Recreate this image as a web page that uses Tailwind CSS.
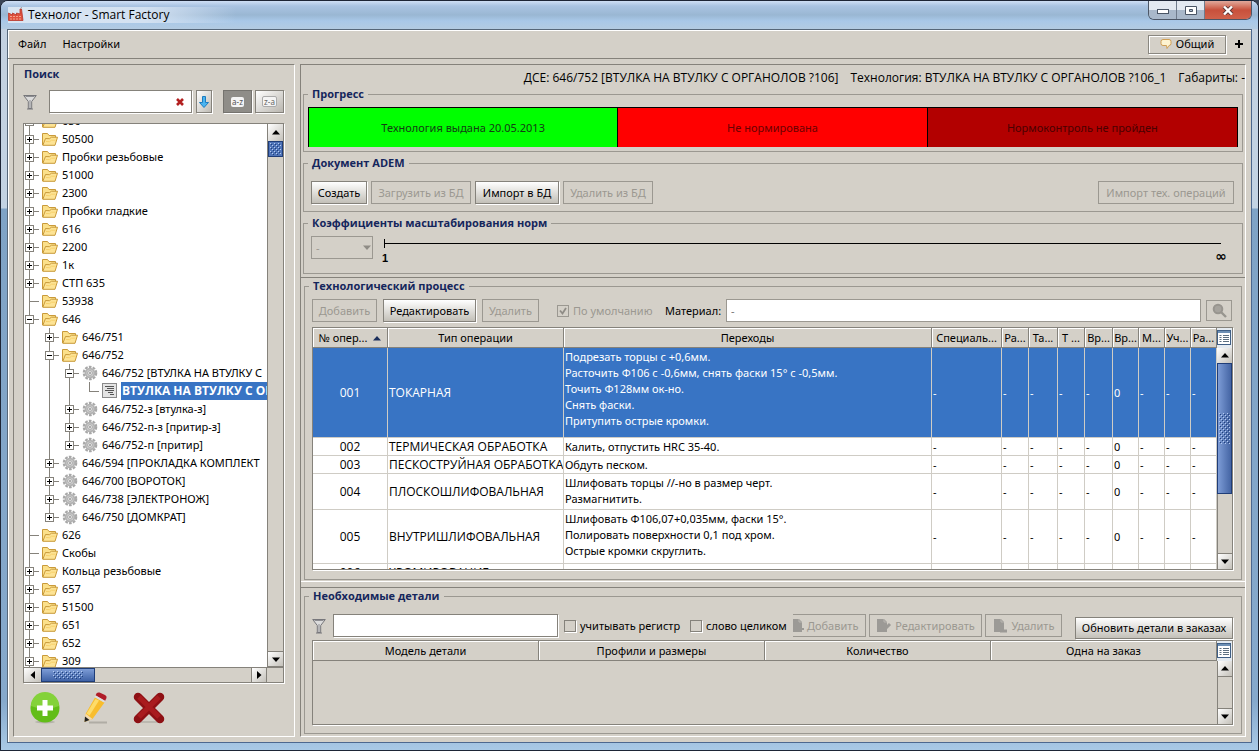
<!DOCTYPE html>
<html lang="ru">
<head>
<meta charset="utf-8">
<title>Технолог - Smart Factory</title>
<script src="https://cdn.jsdelivr.net/npm/@tailwindcss/browser@4"></script>
</head>
<body class="bg-[#3a4456] font-['Noto_Sans','Open_Sans',sans-serif] text-[11px] leading-4 text-black">

<svg class="absolute size-0" aria-hidden="true">
  <symbol id="folder" viewBox="0 0 16 14">
    <path d="M.5 13V1.500h5l1.500 2h6.500v3" fill="#fbe08a" stroke="#c99a3a"/>
    <path d="M.8 13.300 3.500 6.500l4 .2 2-1.500h6L13 13.300z" fill="#fde394" stroke="#c99a3a"/>
    <path d="M4 9.500l3.500.2 2-1.500h4" fill="none" stroke="#f6d06a"/>
  </symbol>
  <symbol id="gear" viewBox="0 0 16 16">
    <circle cx="8" cy="8" r="6.200" fill="none" stroke="#a8a8a8" stroke-width="2.200" stroke-dasharray="2.700 1.200"/>
    <circle cx="8" cy="8" r="4.400" fill="#d2d2d2" stroke="#b2b2b2" stroke-width="1.800"/>
    <circle cx="8" cy="8" r="2.400" fill="#e8e8e8" stroke="#9e9e9e" stroke-width=".8"/>
    <circle cx="8" cy="8" r="1" fill="#999"/>
  </symbol>
  <symbol id="doc" viewBox="0 0 16 16">
    <rect x=".5" y=".5" width="14" height="14" fill="#e4e4e4" stroke="#8a8a8a"/>
    <path d="M3 3.500h9M5 5.500h7M3 7.500h9M6 9.500h5M8 11.500h4" stroke="#555"/>
  </symbol>
  <symbol id="funnel" viewBox="0 0 14 16">
    <path d="M.7 1.500h12.600L8.700 7.500V14.500H5.300V7.500z" fill="#dcdcdc" stroke="#77777b"/>
    <path d="M2.500 2.500h9M7 6v8" stroke="#8e8e92"/>
    <path d="M4 15h6" stroke="#77777b"/>
  </symbol>
  <symbol id="up" viewBox="0 0 8 5"><path d="M4 0l4 4.500H0z"/></symbol>
  <symbol id="down" viewBox="0 0 8 5"><path d="M4 5L0 .5h8z"/></symbol>
  <symbol id="columns" viewBox="0 0 14 15">
    <rect x=".5" y=".5" width="13" height="14" fill="#fff" stroke="#3f5f86"/>
    <path d="M1 2h12" stroke="#6d8fb4" stroke-width="2"/>
    <path d="M2.500 5.500h2M6 5.500h6M2.500 7.500h2M6 7.500h6M2.500 9.500h2M6 9.500h6M2.500 11.500h2M6 11.500h6" stroke="#5d6f80"/>
  </symbol>
  <symbol id="page" viewBox="0 0 16 16">
    <path d="M1 1h7l3 3v10H1z" fill="#9c9a96"/>
    <path d="M8 1v3h3" fill="none" stroke="#b9b6b0"/>
  </symbol>
  <pattern id="grip" width="4" height="4" patternUnits="userSpaceOnUse">
    <path d="M0 0h1v1H0zM2 2h1v1H2z" fill="#b4caf0"/><path d="M1 1h1v1H1zM3 3h1v1H3z" fill="#20407c"/>
  </pattern>
</svg>

<div class="flex h-screen flex-col overflow-hidden rounded-t-lg border border-[#1d2536] bg-[linear-gradient(180deg,#c3d0e0_0,#c3d3e3_207px,#7fa3c6_208px,#86a9cc_700px,#a9c9e6_100%)]">
  <header class="flex h-7 shrink-0 items-center bg-[linear-gradient(180deg,#cfdff5_0,#a9c3e2_5px,#9ab7d3_14px,#a9c8e8_20px,#b3cbe2_100%)] pl-[7px]">
    <div class="flex flex-1 items-center gap-1 bg-[linear-gradient(90deg,#d9e5f2_0,#d3e1f1_12%,transparent_20%)]">
      <svg class="size-4" viewBox="0 0 16 16"><path d="M.5 13.500V6l4 2V6l4 2V6l3.500 1V2h1.500l1.500 11.500z" fill="#e0523f" stroke="#b8352a" stroke-width=".8"/><path d="M2 9.500h11M2 12h11" stroke="#f6a08c" stroke-dasharray="2 1"/><path d="M12.500 1.200l1.500-.7" stroke="#999"/></svg>
      <h1 class="font-['Open_Sans'] text-[12px] font-normal">Технолог - Smart Factory</h1>
    </div>
    <div class="mr-[6px] flex h-[19px] self-start overflow-hidden rounded-b-md border border-t-0 border-[#4c5666] text-white">
      <button class="flex w-7 items-center justify-center border-r border-[#6f7b8c] bg-linear-to-b from-[#e3e9f1] from-50% to-[#a9b8ca] to-50%" aria-label="Свернуть"><svg class="h-2 w-3" viewBox="0 0 12 8"><rect x=".5" y="3.500" width="11" height="4" fill="#fff" stroke="#4a5565"/></svg></button>
      <button class="flex w-7 items-center justify-center border-r border-[#6f7b8c] bg-linear-to-b from-[#e3e9f1] from-50% to-[#a9b8ca] to-50%" aria-label="Развернуть"><svg class="h-[9px] w-3" viewBox="0 0 12 9"><path d="M.5.5h11v8H.5zM4.500 3.500h3v2h-3z" fill="#fff" stroke="#4a5565" fill-rule="evenodd"/></svg></button>
      <button class="flex w-[46px] items-center justify-center bg-linear-to-b from-[#e0a89b] via-[#c8503c] via-50% to-[#d0614a]" aria-label="Закрыть"><svg class="h-[9px] w-3" viewBox="0 0 12 9"><path d="M2 .5l8 8M10 .5l-8 8" stroke="#5a3434" stroke-width="4"/><path d="M2 .5l8 8M10 .5l-8 8" stroke="#fff" stroke-width="2.400"/></svg></button>
    </div>
  </header>

  <div class="mx-[6px] mb-[7px] flex min-h-0 flex-1 flex-col border border-[#56677a] border-r-[#4d688f] border-b-[#4d688f] bg-[#d4d0c8] shadow-[inset_1px_1px_0_#fff]">
    <nav class="flex h-[29px] shrink-0 items-center border-b border-[#85827b] pr-2 pl-[10px]">
      <button class="mr-4">Файл</button>
      <button>Настройки</button>
      <div class="flex-1"></div>
      <button class="mr-[1px] flex h-[19px] w-[78px] items-center justify-center gap-1 border border-[#8a8780] shadow-[inset_1px_1px_0_#fff,1px_1px_0_#fff]"><svg class="size-3" viewBox="0 0 12 12"><path d="M3 1.500h6a2 2 0 0 1 2 2v2a2 2 0 0 1-2 2L7 10.500 6.500 7.500H3a2 2 0 0 1-2-2v-2a2 2 0 0 1 2-2z" fill="#fdf3d0" stroke="#cf9f55"/></svg>Общий</button>
      <button class="ml-2" aria-label="Добавить вкладку"><svg class="size-2" viewBox="0 0 8 8"><path d="M4 0v8M0 4h8" stroke="#000" stroke-width="2"/></svg></button>
    </nav>

    <main class="flex min-h-0 flex-1 gap-[5px] px-[5px] pt-[5px] pb-[5px]">
      <aside class="flex w-[282px] shrink-0 flex-col border border-[#85827b] border-r-white border-b-white pr-[10px] pl-[9px]">
        <h2 class="pt-[1px] pl-[1px] font-['Open_Sans'] font-bold text-[#15265c]">Поиск</h2>
        <div class="mt-2 flex h-[23px] items-center">
          <svg class="mr-3 h-4 w-[14px]"><use href="#funnel"/></svg>
          <div class="relative mr-1 h-full flex-1">
            <input type="text" aria-label="Поиск" class="size-full border border-[#85827b] bg-white px-1 shadow-[1px_1px_0_#fff]">
            <button class="absolute top-2 right-2" aria-label="Очистить"><svg class="block h-2 w-2" viewBox="0 0 8 8"><path d="M1 1l6 6M7 1L1 7" stroke="#b32020" stroke-width="2.600"/></svg></button>
          </div>
          <button class="mr-[11px] flex h-full w-4 items-center justify-center border border-[#85827b] bg-linear-to-br from-white to-[#bdbab3] shadow-[1px_1px_0_#fff]" aria-label="Вниз"><svg class="h-3 w-[10px]" viewBox="0 0 10 12"><path d="M3.500.5h3v6h3L5 11.500.5 6.500h3z" fill="#4ab4f0" stroke="#1d7cc0"/></svg></button>
          <button class="mr-[3px] flex h-full w-[29px] items-center justify-center border border-[#75736e] bg-[#8f8d88] shadow-[1px_1px_0_#fff]"><span class="rounded-xs bg-[#f4f4f4] px-[1px] text-[8px] leading-[10px] text-[#555]">a-z</span></button>
          <button class="flex h-full w-[29px] items-center justify-center border border-[#85827b] bg-linear-to-br from-white to-[#b9b6af] shadow-[1px_1px_0_#fff]"><span class="rounded-xs border border-[#aaa] bg-[#f4f4f4] px-[1px] text-[8px] leading-[9px] text-[#666]">z-a</span></button>
        </div>
        <div class="mt-[10px] flex min-h-0 flex-1 flex-col border border-[#85827b] bg-[#d4d0c8] shadow-[1px_1px_0_#fff]">
          <div class="flex min-h-0 flex-1">
            <div class="min-w-0 flex-1 overflow-hidden bg-white"><ul id="tree" class="-mt-[12px]"></ul></div>
            <div class="flex w-4 flex-col border-l border-[#85827b]">
              <button class="flex h-[17px] items-center justify-center bg-linear-to-br from-white to-[#c4c1ba]" aria-label="Вверх"><svg class="h-[5px] w-2"><use href="#up"/></svg></button>
              <div class="h-4 border border-[#1f3d78] bg-[#4f74b8] p-[1px]"><svg class="size-full"><rect width="100%" height="100%" fill="url(#grip)"/></svg></div>
              <div class="flex-1"></div>
              <button class="flex h-4 items-center justify-center border-y border-[#85827b] bg-linear-to-br from-white to-[#c4c1ba]" aria-label="Вниз"><svg class="h-[5px] w-2"><use href="#down"/></svg></button>
            </div>
          </div>
          <div class="flex h-[15px] border-t border-[#85827b] pr-[16px]">
            <button class="flex w-[17px] items-center justify-center bg-linear-to-br from-white to-[#c4c1ba]" aria-label="Влево"><svg class="size-2 -rotate-90"><use href="#up"/></svg></button>
            <div class="w-[54px] border border-[#1f3d78] bg-linear-to-b from-[#7d9cd6] to-[#3f62a6] px-[11px] py-[2px]"><svg class="size-full"><rect width="100%" height="100%" fill="url(#grip)"/></svg></div>
            <div class="flex-1"></div>
            <button class="flex w-4 items-center justify-center border-x border-[#85827b] bg-linear-to-br from-white to-[#c4c1ba]" aria-label="Вправо"><svg class="size-2 rotate-90"><use href="#up"/></svg></button>
          </div>
        </div>
        <div class="flex h-[53px] shrink-0 items-center gap-5 pb-1 pl-[6px]">
          <button aria-label="Добавить"><svg class="size-8" viewBox="0 0 32 32"><ellipse cx="16" cy="30" rx="10" ry="1.500" fill="#b5b2aa"/><circle cx="16" cy="16" r="14.500" fill="#62bd18"/><path d="M2 14a14 14 0 0 1 28 0q-14 6-28 0z" fill="#84d23a"/><path d="M16 8v16M8 16h16" stroke="#fff" stroke-width="5"/></svg></button>
          <button aria-label="Редактировать"><svg class="size-8" viewBox="0 0 32 32"><path d="M8 30.500h18" stroke="#b0ada5" stroke-width="2"/><path d="M14 5.500l9.500 5L11.500 27 3.500 30l1-8z" fill="#f8bd2d"/><path d="M14.500 7l-9 14.500 3 2 9.500-15z" fill="#fddc6a"/><path d="M4.500 21.500l7 5.500-8 3z" fill="#f1d9b0"/><path d="M4 24.500l4.500 3.500-5 2z" fill="#222"/><path d="M14.500 3.500l9.500 5.500 1.500-3q.5-2-1.500-3L18.500.5q-2-.5-3 1z" fill="#b01c28"/><path d="M13.500 5l9.500 5.500 1-1.700-9.500-5.500z" fill="#ddd"/></svg></button>
          <button aria-label="Удалить"><svg class="size-8" viewBox="0 0 32 32"><path d="M5 30h22" stroke="#bbb8b0" stroke-width="2"/><path d="M5 5l22 22M27 5L5 27" stroke="#8e1014" stroke-width="8.500" stroke-linecap="round"/><path d="M6 5l20 20M26 5L6 25" stroke="#a91b1e" stroke-width="5"/></svg></button>
        </div>
      </aside>

      <section class="flex min-w-0 flex-1 flex-col border border-[#85827b] border-r-white border-b-white">
        <div class="flex h-[21px] shrink-0 items-end justify-end gap-3 overflow-hidden pl-2 font-['Open_Sans'] text-[12px] whitespace-nowrap">
          <span>ДСЕ: 646/752 [ВТУЛКА НА ВТУЛКУ С ОРГАНОЛОВ ?106]</span><span>Технология: ВТУЛКА НА ВТУЛКУ С ОРГАНОЛОВ ?106_1</span><span>Габариты: -</span>
        </div>
        <fieldset class="mx-[2px] min-w-0 shrink-0 border border-[#9b9891] px-1 pt-[5px] pb-1">
          <legend class="px-1 font-['Open_Sans'] font-bold text-[#15265c]">Прогресс</legend>
          <div class="grid h-10 grid-cols-3 divide-x divide-black border border-black text-center leading-[39px]">
            <div class="bg-[#00ff00] text-[#143c14]">Технология выдана 20.05.2013</div>
            <div class="bg-[#ff0000] text-[#6b0000]">Не нормирована</div>
            <div class="bg-[#b20000] text-[#4a0000]">Нормоконтроль не пройден</div>
          </div>
        </fieldset>
        <fieldset class="mx-[2px] mt-[3px] min-w-0 shrink-0 border border-[#9b9891] px-[7px] pt-[10px] pb-[7px]">
          <legend class="-ml-[3px] px-1 font-['Open_Sans'] font-bold text-[#15265c]">Документ ADEM</legend>
          <div class="flex h-[23px] gap-1 whitespace-nowrap">
            <button class="w-14 border border-[#85827b] bg-linear-to-b from-white to-[#c3c0b8] shadow-[1px_1px_0_#fff]">Создать</button>
            <button disabled class="w-[100px] border border-[#9b9891] text-[#9b9891]">Загрузить из БД</button>
            <button class="w-[84px] border border-[#85827b] bg-linear-to-b from-white to-[#c3c0b8] shadow-[1px_1px_0_#fff]">Импорт в БД</button>
            <button disabled class="w-[90px] border border-[#9b9891] text-[#9b9891]">Удалить из БД</button>
            <div class="flex-1"></div>
            <button disabled class="mr-[1px] w-[136px] border border-[#9b9891] text-[#9b9891]">Импорт тех. операций</button>
          </div>
        </fieldset>
        <fieldset class="mx-[2px] mt-[3px] min-w-0 shrink-0 border border-[#9b9891] px-[7px] pt-[5px] pb-[14px]">
          <legend class="-ml-[3px] px-1 font-['Open_Sans'] font-bold text-[#15265c]">Коэффициенты масштабирования норм</legend>
          <div class="flex h-[23px] gap-[11px]">
            <div class="relative w-[62px]">
              <select disabled aria-label="Коэффициент" class="size-full appearance-none border border-[#9b9891] px-1 text-[#9b9891]"><option>-</option></select>
              <svg class="absolute top-[9px] right-[2px] h-[5px] w-2 fill-[#8f8c86]"><use href="#down"/></svg>
            </div>
            <div class="mr-[14px] flex-1 font-bold">
              <svg class="block h-[14px] w-full"><path d="M.5 3v9" stroke="#000"/><rect y="7" width="100%" height="1"/></svg>
              <div class="-mr-[6px] -ml-[2px] flex justify-between font-['Liberation_Sans']"><span>1</span><span class="font-['DejaVu_Sans'] text-[14px] leading-3 font-bold">∞</span></div>
            </div>
          </div>
        </fieldset>
        <div class="mt-[3px] flex min-h-0 flex-1 flex-col border-t border-b border-t-[#85827b] border-b-white pb-[1px]">
        <fieldset class="mx-[3px] flex min-h-0 min-w-0 flex-1 flex-col border border-[#9b9891] pt-[5px] pr-2 pb-[9px] pl-[7px]">
          <legend class="-ml-[3px] px-1 font-['Open_Sans'] font-bold text-[#15265c]">Технологический процесс</legend>
          <div class="flex h-[23px] shrink-0 items-stretch whitespace-nowrap">
            <button disabled class="mr-[6px] w-[65px] border border-[#9b9891] text-[#9b9891]">Добавить</button>
            <button class="mr-[6px] w-[93px] border border-[#85827b] bg-linear-to-b from-white to-[#c3c0b8] shadow-[1px_1px_0_#fff]">Редактировать</button>
            <button disabled class="mr-[18px] w-[57px] border border-[#9b9891] text-[#9b9891]">Удалить</button>
            <label class="flex w-[108px] items-center gap-1 text-[#9b9891]"><span class="relative size-3"><input type="checkbox" checked disabled class="block size-3 appearance-none border border-[#9b9891]"><svg class="absolute inset-0 size-3" viewBox="0 0 12 12"><path d="M3 5.500l2.500 3L9 3" fill="none" stroke="#8f8c86" stroke-width="1.800"/></svg></span>По умолчанию</label>
            <label class="flex flex-1 items-center"><span class="w-[61px]">Материал:</span><input type="text" value="-" class="h-full min-w-0 flex-1 border border-[#9b9891] bg-white px-1 text-[#777]"></label>
            <button disabled class="mr-[1px] ml-[5px] flex w-[26px] items-center justify-center self-center border border-[#9b9891] py-[2px]" aria-label="Найти"><svg class="size-[15px]" viewBox="0 0 15 15"><circle cx="6" cy="6" r="4.300" fill="#a6a39d" stroke="#98958f" stroke-width="2"/><path d="M9 9l5 5" stroke="#98958f" stroke-width="2.400"/></svg></button>
          </div>
          <div class="mt-[5px] flex min-h-0 flex-1 border border-[#85827b] shadow-[1px_1px_0_#fff]">
            <div class="min-w-0 flex-1 overflow-hidden bg-white">
              <table class="w-full table-fixed border-separate border-spacing-0">
                <colgroup><col class="w-[75px]"><col class="w-44"><col><col class="w-[70px]"><col class="w-[27px]"><col class="w-[29px]"><col class="w-[27px]"><col class="w-7"><col class="w-[26px]"><col class="w-[26px]"><col class="w-[26px]"><col class="w-[26px]"></colgroup>
                <thead><tr id="opsHead" class="h-5"></tr></thead>
                <tbody id="ops"></tbody>
              </table>
            </div>
            <div class="flex w-[15px] flex-col">
              <div class="h-5 bg-[#e4eaf0] pt-[2px]"><svg class="h-[15px] w-[14px]"><use href="#columns"/></svg></div>
              <button class="flex h-[15px] items-center justify-center bg-linear-to-br from-white to-[#c4c1ba]" aria-label="Вверх"><svg class="h-[5px] w-2"><use href="#up"/></svg></button>
              <div class="flex h-[131px] items-center border border-[#1f3d78] bg-linear-to-r from-[#7d9cd6] to-[#4565a4] px-[1px]"><svg class="h-[31px] w-full"><rect width="100%" height="100%" fill="url(#grip)"/></svg></div>
              <div class="flex-1 border-l border-[#85827b] bg-[#d4d0c8]"></div>
              <button class="flex h-4 items-center justify-center border-t border-l border-[#85827b] bg-linear-to-br from-white to-[#c4c1ba]" aria-label="Вниз"><svg class="h-[5px] w-2"><use href="#down"/></svg></button>
            </div>
          </div>
        </fieldset>
        </div>
        <div class="mt-[5px] shrink-0 border-t border-[#85827b] pb-[2px]">
        <fieldset class="mx-[3px] min-w-0 border border-[#9b9891] pt-[10px] pr-2 pb-2 pl-[7px]">
          <legend class="-ml-[3px] px-1 font-['Open_Sans'] font-bold text-[#15265c]">Необходимые детали</legend>
          <div class="flex h-[23px] items-center whitespace-nowrap">
            <svg class="mr-[7px] h-4 w-[14px] shrink-0"><use href="#funnel"/></svg>
            <input type="text" aria-label="Фильтр деталей" class="mr-[6px] h-full w-[225px] border border-[#85827b] bg-white px-1 shadow-[1px_1px_0_#fff]">
            <label class="flex w-[126px] items-center gap-1"><input type="checkbox" class="size-3 shrink-0 appearance-none border border-[#85827b] shadow-[1px_1px_0_#fff]">учитывать регистр</label>
            <label class="flex w-[103px] items-center gap-1"><input type="checkbox" class="size-3 shrink-0 appearance-none border border-[#85827b] shadow-[1px_1px_0_#fff]">слово целиком</label>
            <button disabled class="mr-[3px] flex h-full w-[73px] items-center border border-l-0 border-[#9b9891] text-[#9b9891]"><svg class="h-4 w-[14px] shrink-0" viewBox="2 0 14 16"><use href="#page" width="16" height="16"/><path d="M10 8v6M7 11h6" stroke="#9c9a96" stroke-width="2"/></svg>Добавить</button>
            <button disabled class="mr-[3px] flex h-full w-[113px] items-center justify-center gap-[3px] border border-[#9b9891] text-[#9b9891]"><svg class="size-4 shrink-0" viewBox="0 0 16 16"><use href="#page" width="16" height="16"/><path d="M8 12l6-6" stroke="#9c9a96" stroke-width="3"/></svg>Редактировать</button>
            <button disabled class="flex h-full w-[77px] items-center justify-center gap-[3px] border border-[#9b9891] text-[#9b9891]"><svg class="size-4 shrink-0" viewBox="0 0 16 16"><use href="#page" width="16" height="16"/><path d="M7 13h7" stroke="#9c9a96" stroke-width="3"/></svg>Удалить</button>
            <div class="flex-1"></div>
            <button class="mt-1 h-[22px] w-[158px] border border-[#85827b] bg-linear-to-b from-white to-[#c3c0b8] shadow-[1px_1px_0_#fff]">Обновить детали в заказах</button>
          </div>
          <div class="mt-[3px] flex h-[85px] border border-[#85827b] shadow-[1px_1px_0_#fff]">
            <div class="min-w-0 flex-1">
              <table class="w-full table-fixed border-separate border-spacing-0">
                <thead><tr class="h-5">
                  <th class="border-r border-b border-[#85827b] p-0 font-normal shadow-[inset_1px_1px_0_#fff]">Модель детали</th>
                  <th class="border-r border-b border-[#85827b] p-0 font-normal shadow-[inset_1px_1px_0_#fff]">Профили и размеры</th>
                  <th class="border-r border-b border-[#85827b] p-0 font-normal shadow-[inset_1px_1px_0_#fff]">Количество</th>
                  <th class="border-r border-b border-[#85827b] p-0 font-normal shadow-[inset_1px_1px_0_#fff]">Одна на заказ</th>
                </tr></thead>
              </table>
            </div>
            <div class="flex w-[15px] flex-col">
              <div class="h-5 bg-[#e4eaf0] pt-[2px]"><svg class="h-[15px] w-[14px]"><use href="#columns"/></svg></div>
              <button class="flex h-4 items-center justify-center border-b border-l border-[#85827b] bg-linear-to-br from-white to-[#c4c1ba]" aria-label="Вверх"><svg class="h-[5px] w-2"><use href="#up"/></svg></button>
              <div class="flex-1 border-l border-[#85827b]"></div>
              <button class="flex h-4 items-center justify-center border-t border-l border-[#85827b] bg-linear-to-br from-white to-[#c4c1ba]" aria-label="Вниз"><svg class="h-[5px] w-2"><use href="#down"/></svg></button>
            </div>
          </div>
        </fieldset>
        </div>
      </section>
    </main>
  </div>
</div>

<script>
// Tree rows: [level, expander, icon, text, last sibling]
const rows = [
  [0,'+','folder','650'],[0,'+','folder','50500'],[0,'+','folder','Пробки резьбовые'],[0,'+','folder','51000'],
  [0,'+','folder','2300'],[0,'+','folder','Пробки гладкие'],[0,'+','folder','616'],[0,'+','folder','2200'],
  [0,'+','folder','1к'],[0,'+','folder','СТП 635'],[0,'','folder','53938'],[0,'-','folder','646'],
  [1,'+','folder','646/751'],[1,'-','folder','646/752'],[2,'-','gear','646/752 [ВТУЛКА НА ВТУЛКУ С'],
  [3,'','doc','ВТУЛКА НА ВТУЛКУ С ОРГ',1],[2,'+','gear','646/752-з [втулка-з]'],
  [2,'+','gear','646/752-п-з [притир-з]'],[2,'+','gear','646/752-п [притир]',1],
  [1,'+','gear','646/594 [ПРОКЛАДКА КОМПЛЕКТ'],[1,'+','gear','646/700 [ВОРОТОК]'],[1,'+','gear','646/738 [ЭЛЕКТРОНОЖ]'],
  [1,'+','gear','646/750 [ДОМКРАТ]',1],[0,'','folder','626'],[0,'','folder','Скобы'],[0,'+','folder','Кольца резьбовые'],
  [0,'+','folder','657'],[0,'+','folder','51500'],[0,'+','folder','651'],[0,'+','folder','652'],[0,'+','folder','309']
];
document.getElementById('tree').innerHTML = rows.map(([lvl, exp, icon, text, last]) => {
  const guide = '<svg class="h-[18px] w-5 shrink-0"><path d="M5.5 0v18" stroke="#85827b"/></svg>'.repeat(lvl);
  const box = exp ? `<rect x="1.500" y="5.500" width="8" height="8" fill="#fff" stroke="#85827b"/><path d="M3 9.500h5${exp === '+' ? 'M5.500 7v5' : ''}" stroke="#000"/>` : '';
  const cell = `<svg class="h-[18px] w-[18px] shrink-0"><path d="M5.500 0v${last ? 9 : 18}M5 9.500h10" stroke="#85827b" fill="none"/>${box}</svg>`;
  const ico = icon === 'folder' ? '<svg class="mr-1 h-[14px] w-4 shrink-0"><use href="#folder"/></svg>'
    : icon === 'gear' ? '<svg class="mr-1 size-4 shrink-0"><use href="#gear"/></svg>'
    : '<svg class="mr-[3px] size-4 shrink-0"><use href="#doc"/></svg>';
  const label = icon === 'doc' ? `<span class="bg-[#3874c4] pl-[1px] font-['Open_Sans'] text-[12px] font-bold text-white leading-[18px]">${text}</span>` : `<span class="leading-[18px]">${text}</span>`;
  return `<li class="flex h-[18px] items-center whitespace-nowrap">${guide}${cell}${ico}${label}</li>`;
}).join('');

const heads = ['№ опер...','Тип операции','Переходы','Специаль...','Ра...','Та...','Т ...','Вр...','Вр...','М...','Уч...','Ра...'];
document.getElementById('opsHead').innerHTML = heads.map((h, i) =>
  `<th class="overflow-hidden border-r border-b border-[#85827b] bg-[#d4d0c8] p-0 font-normal whitespace-nowrap shadow-[inset_1px_1px_0_#fff]">${h}${i ? '' : '<svg class="ml-[6px] inline h-[5px] w-2 fill-[#1c2f5c]"><use href="#up"/></svg>'}</th>`).join('');

const ops = [
  ['001','ТОКАРНАЯ',['Подрезать торцы с +0,6мм.','Расточить Ф106 с -0,6мм, снять фаски 15° с -0,5мм.','Точить Ф128мм ок-но.','Снять фаски.','Притупить острые кромки.'],'h-[90px] bg-[#3874c4] text-white'],
  ['002','ТЕРМИЧЕСКАЯ ОБРАБОТКА',['Калить, отпустить HRC 35-40.'],'h-[18px]'],
  ['003','ПЕСКОСТРУЙНАЯ ОБРАБОТКА',['Обдуть песком.'],'h-[18px]'],
  ['004','ПЛОСКОШЛИФОВАЛЬНАЯ',['Шлифовать торцы //-но в размер черт.','Размагнитить.'],'h-9'],
  ['005','ВНУТРИШЛИФОВАЛЬНАЯ',['Шлифовать Ф106,07+0,035мм, фаски 15°.','Полировать поверхности 0,1 под хром.','Острые кромки скруглить.'],'h-[54px]'],
  ['006','ХРОМИРОВАНИЕ',[''],'h-[18px]']
];
const td = 'overflow-hidden border-r border-b border-[#cfccc5] p-0 pl-[1px] whitespace-nowrap';
document.getElementById('ops').innerHTML = ops.map(([n, type, steps, cls]) =>
  `<tr class="${cls}"><td class="overflow-hidden border-r border-b border-[#cfccc5] p-0 text-center font-['Open_Sans'] text-[12px]">${n}</td><td class="${td} font-['Open_Sans'] text-[12px]">${type}</td>` +
  `<td class="overflow-hidden border-r border-b border-[#cfccc5] p-0 pl-[1px] align-top whitespace-nowrap"><div class="pt-[1px]">${steps.join('<br>')}</div></td>` +
  ['-','-','-','-','-','0','-','-','-'].map(v => `<td class="${td}">${v}</td>`).join('') + '</tr>').join('');
</script>
</body>
</html>
